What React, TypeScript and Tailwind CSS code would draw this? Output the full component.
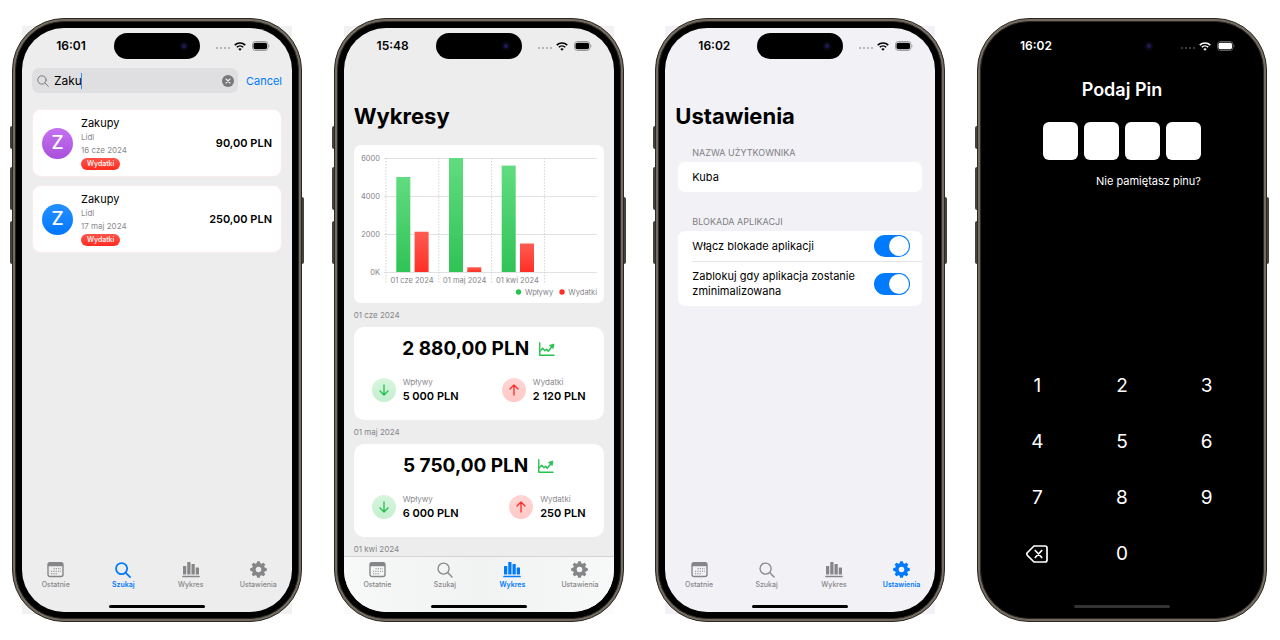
import type { ReactNode } from "react";

type TabName = "Ostatnie" | "Szukaj" | "Wykres" | "Ustawienia";

function Wifi() {
  return (
    <svg viewBox="0 0 24 18" className="h-[9px] w-3" fill="none" stroke="currentColor" strokeWidth="3.2">
      <path d="M1.5 6.2a15 15 0 0 1 21 0" />
      <path d="M5.6 10.6a9.2 9.2 0 0 1 12.8 0" />
      <path d="M12 17.6 8.6 14a4.8 4.8 0 0 1 6.8 0z" fill="currentColor" stroke="none" />
    </svg>
  );
}

function Battery() {
  return (
    <svg viewBox="0 0 36 20" className="h-[10px] w-[18px]">
      <rect x="1" y="1" width="31" height="18" rx="6" fill="none" stroke="currentColor" strokeOpacity=".35" strokeWidth="2" />
      <rect x="3" y="3.6" width="27" height="12.8" rx="3.6" fill="currentColor" />
      <path d="M33.5 7c1.8.8 1.8 5.2 0 6z" fill="currentColor" fillOpacity=".4" />
    </svg>
  );
}

function StatusBar({ time }: { time: string }) {
  return (
    <div className="grid h-9 shrink-0 grid-cols-[1fr_86px_1fr] items-center">
      <span className="pl-1.5 text-center text-[12px] leading-4 font-semibold">{time}</span>
      <span className="flex h-[26px] items-center justify-end rounded-full bg-black pr-3">
        <span className="flex size-2 items-center justify-center rounded-full bg-[#0b0817]">
          <span className="size-1 rounded-full bg-[#1b1b57]" />
        </span>
      </span>
      <span className="flex items-center pl-4">
        <span className="mt-1 mr-1 flex gap-0.5 opacity-30">
          {[0, 1, 2, 3].map((dot) => (
            <span key={dot} className="size-0.5 rounded-full bg-current" />
          ))}
        </span>
        <Wifi />
        <span className="ml-1.5">
          <Battery />
        </span>
      </span>
    </div>
  );
}

function CalendarIcon() {
  return (
    <svg viewBox="0 0 34 34" className="size-[17px]">
      <rect x="2" y="3.5" width="30" height="27.5" rx="4" fill="none" stroke="currentColor" strokeWidth="2.8" />
      <path d="M2 10.5V7a4 4 0 0 1 4-4h22a4 4 0 0 1 4 4v3.5z" fill="currentColor" />
      <path d="M13 15.500h15M8 20.500h20M8 25.500h14" stroke="currentColor" strokeWidth="2.4" strokeDasharray="2.4 2.2" />
    </svg>
  );
}

function SearchIcon({ bold = false }: { bold?: boolean }) {
  return (
    <svg viewBox="0 0 34 34" className="block size-full" fill="none" stroke="currentColor" strokeWidth={bold ? 3.8 : 2.8} strokeLinecap="round">
      <circle cx="14" cy="14" r="11.8" />
      <path d="m22.500 22.500 9.500 9.500" />
    </svg>
  );
}

function BarsIcon() {
  return (
    <svg viewBox="0 0 36 34" className="h-[17px] w-[18px]" fill="currentColor">
      <rect x="2" y="10" width="6.5" height="17" rx="1" />
      <rect x="10.5" y="2" width="6.5" height="25" rx="1" />
      <rect x="19" y="6" width="6.5" height="21" rx="1" />
      <rect x="27.5" y="13" width="6.5" height="14" rx="1" />
      <rect x="0.5" y="29.5" width="35" height="2.8" rx="1" />
    </svg>
  );
}

function GearIcon() {
  return (
    <svg viewBox="-17 -17 34 34" className="size-[17px]" fill="currentColor">
      {[0, 45, 90, 135, 180, 225, 270, 315].map((angle) => (
        <path key={angle} transform={`rotate(${angle})`} d="M-4-11-3-15.600q.2-1 1.200-1h3.600q1 0 1.200 1L4-11z" />
      ))}
      <path fillRule="evenodd" d="M0-13a13 13 0 1 0 0 26a13 13 0 1 0 0-26zM0-5.600a5.600 5.600 0 1 1 0 11.200a5.600 5.600 0 1 1 0-11.200z" />
    </svg>
  );
}

const tabs: { name: TabName; icon: (active: boolean) => ReactNode }[] = [
  { name: "Ostatnie", icon: () => <CalendarIcon /> },
  { name: "Szukaj", icon: (active) => <span className="size-4"><SearchIcon bold={active} /></span> },
  { name: "Wykres", icon: () => <BarsIcon /> },
  { name: "Ustawienia", icon: () => <GearIcon /> },
];

function TabBar({ active, raised = false }: { active: TabName; raised?: boolean }) {
  return (
    <nav className={`mt-auto shrink-0 ${raised ? "border-t border-[#d3d3d4] bg-linear-to-r from-[#f7f8f8] via-[#f1f2f2] to-[#f7f8f8]" : "border-t border-transparent"}`}>
      <div className="grid grid-cols-4 pt-1">
        {tabs.map(({ name, icon }) => (
          <button
            key={name}
            type="button"
            className={`flex flex-col items-center gap-0.5 text-[7px] leading-[10px] ${name === active ? "font-semibold text-[#007aff]" : "font-medium text-[#868689]"}`}
          >
            <span className="flex h-[17px] items-center">{icon(name === active)}</span>
            {name}
          </button>
        ))}
      </div>
      <HomeIndicator className="bg-black" />
    </nav>
  );
}

function HomeIndicator({ className }: { className: string }) {
  return (
    <div className="flex justify-center pt-[15px] pb-1">
      <span className={`h-[3px] w-24 rounded-full ${className}`} />
    </div>
  );
}

function Phone({ screen, ghost, label, children }: { screen: string; ghost: string; label: string; children: ReactNode }) {
  return (
    <section aria-label={label} className="relative aspect-[145/302] w-[290px] shrink-0">
      <div className={`absolute inset-x-2.5 inset-y-2 ${ghost}`} />
      <span className="absolute top-[108px] -left-0.5 h-[23px] w-1 rounded-l-xs bg-[#45413b]" />
      <span className="absolute top-[149px] -left-0.5 h-[43px] w-1 rounded-l-xs bg-[#45413b]" />
      <span className="absolute top-[203px] -left-0.5 h-[43px] w-1 rounded-l-xs bg-[#45413b]" />
      <span className="absolute top-[179px] -right-0.5 h-[67px] w-1 rounded-r-xs bg-[#45413b]" />
      <div className="relative h-full rounded-[52px] border border-[#2b2823] bg-[#736c61] p-0.5">
        <div className="h-full rounded-[49px] border border-[#2b2823] bg-black p-1.5">
          <div className={`flex h-full flex-col overflow-hidden rounded-[42px] ${screen}`}>{children}</div>
        </div>
      </div>
    </section>
  );
}

function Transaction({ color, date, amount }: { color: string; date: string; amount: string }) {
  return (
    <li className="flex h-[68px] items-center rounded-[9px] border border-[#fbeceb] bg-white px-[9px]">
      <span className={`flex size-[31px] items-center justify-center rounded-full bg-linear-to-b text-[19px] font-medium text-white ${color}`}>Z</span>
      <div className="ml-2 flex flex-1 flex-col items-start text-[8px] leading-[13px] text-[#8a8a8e]">
        <span className="text-[11px] leading-[15px] text-black">Zakupy</span>
        <span>Lidl</span>
        <span>{date}</span>
        <span className="mt-px rounded-full bg-linear-to-b from-[#ff5248] to-[#ff2a1f] px-1.5 text-[7px] leading-3 font-medium text-white">Wydatki</span>
      </div>
      <span className="text-[11px] font-semibold">{amount}</span>
    </li>
  );
}

function SearchScreen() {
  return (
    <>
      <StatusBar time="16:01" />
      <div className="flex items-center gap-2 px-2.5 pt-1">
        <label className="flex h-[25px] min-w-0 flex-1 items-center rounded-[7px] bg-[#dfdfe1] pr-1 pl-[5px]">
          <span className="size-3 shrink-0 text-[#77777b]">
            <SearchIcon />
          </span>
          <span className="relative ml-[5px] min-w-0 flex-1">
            <input aria-label="Szukaj" defaultValue="Zaku" className="block w-full bg-transparent text-[12px] leading-4 outline-none" />
            <span className="absolute top-0 left-[27px] h-4 w-px bg-[#2f8bf5]" />
          </span>
          <button type="button" aria-label="Wyczyść" className="size-3 text-[#78787c]">
            <svg viewBox="0 0 24 24" className="block size-full">
              <circle cx="12" cy="12" r="12" fill="currentColor" />
              <path d="m8 8 8 8m0-8-8 8" stroke="#f0f0f2" strokeWidth="2.2" strokeLinecap="round" />
            </svg>
          </button>
        </label>
        <button type="button" className="text-[11px] leading-4 text-[#007aff]">Cancel</button>
      </div>
      <ul className="flex flex-col gap-2 px-2.5 pt-4">
        <Transaction color="from-[#c472f0] to-[#a94fdc]" date="16 cze 2024" amount="90,00 PLN" />
        <Transaction color="from-[#2490ff] to-[#0076ff]" date="17 maj 2024" amount="250,00 PLN" />
      </ul>
      <TabBar active="Szukaj" />
    </>
  );
}

const months = [
  { label: "01 cze 2024", income: 5000, expense: 2120 },
  { label: "01 maj 2024", income: 6000, expense: 250 },
  { label: "01 kwi 2024", income: 5600, expense: 1500 },
];

function Chart() {
  const base = 127;
  const scale = 114 / 6000;
  return (
    <svg viewBox="0 0 250 158" className="block w-full" role="img" aria-label="Wpływy i wydatki" fontSize="7.5" fill="#858589">
      <defs>
        <linearGradient id="income" x1="0" y1="0" x2="0" y2="1">
          <stop offset="0" stopColor="#61dc80" />
          <stop offset="1" stopColor="#30c356" />
        </linearGradient>
        <linearGradient id="expense" x1="0" y1="0" x2="0" y2="1">
          <stop offset="0" stopColor="#ff5c52" />
          <stop offset="1" stopColor="#ff2f25" />
        </linearGradient>
      </defs>
      {[6000, 4000, 2000, 0].map((tick) => (
        <g key={tick}>
          <path d={`M30 ${base - tick * scale + 0.5}H243`} stroke="#e1e1e3" />
          <text x="26" y={base - tick * scale + 3} textAnchor="end">{tick || "0K"}</text>
        </g>
      ))}
      {[0, 1, 2, 3].map((column) => (
        <path key={column} d={`M${32 + column * 52.8} 13V139`} stroke="#d4d4d6" strokeDasharray="1.5 1.5" />
      ))}
      {months.map((month, index) => (
        <g key={month.label}>
          <rect x={42.3 + index * 52.7} y={base - month.income * scale} width="14" height={month.income * scale} fill="url(#income)" />
          <rect x={60.6 + index * 52.7} y={base - month.expense * scale} width="14" height={month.expense * scale} fill="url(#expense)" />
          <text x={58 + index * 52.7} y="137.5" textAnchor="middle">{month.label}</text>
        </g>
      ))}
      <circle cx="164.5" cy="147" r="2.7" fill="#27c350" />
      <text x="171" y="150">Wpływy</text>
      <circle cx="208" cy="147" r="2.7" fill="#ff2d25" />
      <text x="243" y="150" textAnchor="end">Wydatki</text>
    </svg>
  );
}

function TrendIcon() {
  return (
    <svg viewBox="0 0 32 28" className="h-[14px] w-4 text-[#25c24f]" fill="none" stroke="currentColor" strokeWidth="2.8" strokeLinecap="round" strokeLinejoin="round">
      <path d="M1.5 1.5v25h28.5" />
      <path d="m2 18 5.500-5.500 4.500 5 3.500-3 3 4 8-10" />
      <path d="m21.500 6.500 8.500-2.500-1.500 8.500z" fill="currentColor" strokeWidth="1.600" />
    </svg>
  );
}

function Flow({ up = false, amount }: { up?: boolean; amount: string }) {
  return (
    <div className="flex items-center gap-[7px]">
      <span className={`flex size-6 items-center justify-center rounded-full bg-linear-to-b ${up ? "from-[#ffd7d5] to-[#ffc8c5] text-[#ff2a22]" : "from-[#d6f5de] to-[#c5efcf] text-[#22bf4b]"}`}>
        <svg viewBox="0 0 20 24" className="h-3 w-[10px]" fill="none" stroke="currentColor" strokeWidth="2.6" strokeLinecap="round" strokeLinejoin="round">
          <path d={up ? "M10 22V2M2 10l8-8 8 8" : "M10 2v20M2 14l8 8 8-8"} />
        </svg>
      </span>
      <div>
        <div className="text-[8px] leading-3 text-[#8a8a8e]">{up ? "Wydatki" : "Wpływy"}</div>
        <div className="text-[11px] leading-4 font-semibold">{amount}</div>
      </div>
    </div>
  );
}

function Month({ date, total, income, expense }: { date: string; total: string; income: string; expense: string }) {
  return (
    <>
      <h2 className="shrink-0 text-[8px] leading-6 text-[#85858a]">{date}</h2>
      <div className="flex h-[93px] shrink-0 flex-col rounded-[10px] bg-white px-[18px] pt-2.5">
        <div className="flex items-center justify-center gap-2.5">
          <span className="text-[19px] leading-6 font-bold">{total}</span>
          <TrendIcon />
        </div>
        <div className="flex justify-between pt-[15px]">
          <Flow amount={income} />
          <Flow up amount={expense} />
        </div>
      </div>
    </>
  );
}

function ChartScreen() {
  return (
    <>
      <StatusBar time="15:48" />
      <div className="flex min-h-0 flex-1 flex-col overflow-hidden px-2.5 pt-[38px]">
        <h1 className="shrink-0 text-[22px] leading-7 font-bold">Wykresy</h1>
        <div className="mt-[15px] shrink-0 rounded-[7px] bg-white">
          <Chart />
        </div>
        <Month date="01 cze 2024" total="2 880,00 PLN" income="5 000 PLN" expense="2 120 PLN" />
        <Month date="01 maj 2024" total="5 750,00 PLN" income="6 000 PLN" expense="250 PLN" />
        <h2 className="shrink-0 text-[8px] leading-6 text-[#85858a]">01 kwi 2024</h2>
      </div>
      <TabBar active="Wykres" raised />
    </>
  );
}

function Switch({ id }: { id: string }) {
  return (
    <input
      id={id}
      type="checkbox"
      role="switch"
      defaultChecked
      className="h-[22px] w-9 shrink-0 appearance-none rounded-full bg-[#c7c7cc] p-px before:block before:size-5 before:rounded-full before:bg-white checked:bg-[#007aff] checked:before:ml-3.5"
    />
  );
}

function SettingsScreen() {
  return (
    <>
      <StatusBar time="16:02" />
      <div className="flex flex-col pt-[38px]">
        <h1 className="px-2.5 text-[22px] leading-7 font-bold">Ustawienia</h1>
        <div className="flex flex-col px-[13px] pt-[15px]">
          <label htmlFor="username" className="px-3.5 pb-0.5 text-[9px] leading-[15px] text-[#7e7e83]">NAZWA UŻYTKOWNIKA</label>
          <input id="username" defaultValue="Kuba" className="h-[30px] rounded-[7px] bg-white px-3.5 text-[11px] outline-none" />
          <h2 className="px-3.5 pt-[22px] pb-0.5 text-[9px] leading-[15px] text-[#7e7e83]">BLOKADA APLIKACJI</h2>
          <div className="rounded-[7px] bg-white pl-3.5 text-[11px] leading-[15px]">
            <div className="flex h-[31px] items-center justify-between border-b border-[#e4e4e6] pr-3">
              <label htmlFor="lock">Włącz blokade aplikacji</label>
              <Switch id="lock" />
            </div>
            <div className="flex h-11 items-center justify-between pr-3">
              <label htmlFor="minimized">
                Zablokuj gdy aplikacja zostanie
                <br />
                zminimalizowana
              </label>
              <Switch id="minimized" />
            </div>
          </div>
        </div>
      </div>
      <TabBar active="Ustawienia" />
    </>
  );
}

function PinScreen() {
  return (
    <>
      <StatusBar time="16:02" />
      <div className="flex flex-col items-center pt-[14px]">
        <h1 className="text-[18px] leading-6 font-semibold">Podaj Pin</h1>
        <div className="flex flex-col items-end pt-5">
          <div className="flex gap-1.5">
            {[1, 2, 3, 4].map((digit) => (
              <input key={digit} type="password" maxLength={1} aria-label={`Cyfra ${digit}`} className="h-[38px] w-[35px] rounded-[6px] bg-white text-center text-black" />
            ))}
          </div>
          <a href="#pin" className="pt-[13px] text-[11px] leading-4">Nie pamiętasz pinu?</a>
        </div>
      </div>
      <div className="mt-auto grid grid-cols-3 px-2">
        {["1", "2", "3", "4", "5", "6", "7", "8", "9"].map((digit) => (
          <button key={digit} type="button" className="h-14 text-[19px]">{digit}</button>
        ))}
        <button type="button" aria-label="Usuń" className="flex h-14 items-center justify-center">
          <svg viewBox="0 0 44 36" className="h-[18px] w-[22px]" fill="none" stroke="currentColor" strokeWidth="3.4" strokeLinejoin="round" strokeLinecap="round">
            <path d="M16 2h22a4 4 0 0 1 4 4v24a4 4 0 0 1-4 4H16L2.500 20.500q-1.500-2.500 0-5z" />
            <path d="m18.500 11 13 14m0-14-13 14" />
          </svg>
        </button>
        <button type="button" className="h-14 text-[19px]">0</button>
      </div>
      <div className="pt-2">
        <HomeIndicator className="bg-[#333333]" />
      </div>
    </>
  );
}

export default function App() {
  return (
    <main className="flex min-h-screen items-start justify-between bg-white pt-[18px] pr-[13px] pl-3 font-['Inter','Liberation_Sans',sans-serif] text-black">
      <Phone label="Szukaj" screen="bg-[#ededed]" ghost="bg-[#f1f1f1]">
        <SearchScreen />
      </Phone>
      <Phone label="Wykresy" screen="bg-[#ededed]" ghost="bg-linear-to-b from-[#f1f1f1] to-[#fbfbfb]">
        <ChartScreen />
      </Phone>
      <Phone label="Ustawienia" screen="bg-[#f2f1f6]" ghost="bg-[#f2f1f6]">
        <SettingsScreen />
      </Phone>
      <Phone label="Pin" screen="bg-black text-white" ghost="bg-transparent">
        <PinScreen />
      </Phone>
    </main>
  );
}
